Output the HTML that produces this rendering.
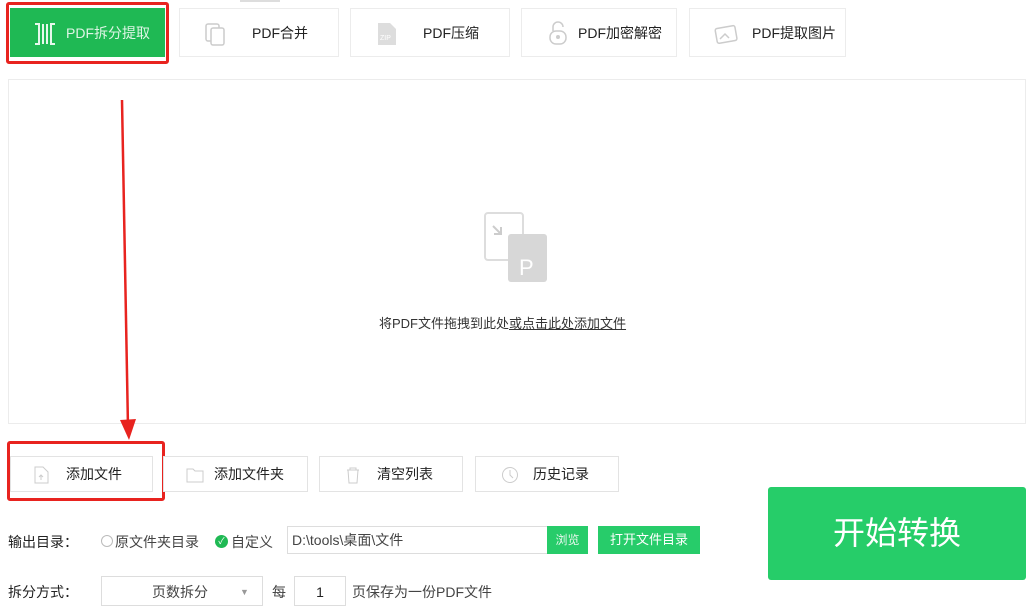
<!DOCTYPE html>
<html><head><meta charset="utf-8"><style>
*{margin:0;padding:0;box-sizing:border-box}
body{width:1034px;height:598px;overflow:hidden;background:#fff;position:relative;font-family:"Liberation Sans","Noto Sans CJK SC",sans-serif;color:#222;font-size:14px}
.a{position:absolute}
.tab{position:absolute;top:8px;height:49px;border:1px solid #ececec;background:#fff;display:flex;align-items:center;font-size:14px;color:#222}
.btn{position:absolute;top:456px;height:36px;border:1px solid #e3e3e3;background:#fff;display:flex;align-items:center;font-size:14px;color:#222}
.red{position:absolute;border:3px solid #e8231f;border-radius:3px}
</style></head><body>
<div class="a" style="left:240px;top:0;width:40px;height:2px;background:#ddd"></div>
<div class="tab" style="left:10px;width:155px;background:#1fb954;border-color:#1fb954;color:#dff5e6">
 <svg class="a" style="left:22px;top:13px" width="26" height="24"><path d="M2 2h4v20H2M10 2v20M14 2v20M22 2h-4v20h4" fill="none" stroke="#e6f8ec" stroke-width="2"/></svg><span style="margin-left:55px">PDF拆分提取</span></div>
<div class="red" style="left:6px;top:2px;width:163px;height:62px"></div>
<div class="tab" style="left:179px;width:160px"><svg class="a" style="left:24px;top:13px" width="24" height="24"><rect x="2" y="2" width="13" height="17" rx="2" fill="none" stroke="#ccc" stroke-width="1.5"/><rect x="7" y="6" width="13" height="17" rx="2" fill="#fff" stroke="#ccc" stroke-width="1.5"/></svg><span style="margin-left:72px">PDF合并</span></div>
<div class="tab" style="left:350px;width:160px"><svg class="a" style="left:24px;top:12px" width="24" height="26"><path d="M3 2h12l6 6v16H3z" fill="#ddd"/><text x="5" y="19" font-size="7" fill="#fff" font-family="Liberation Sans">ZIP</text></svg><span style="margin-left:72px">PDF压缩</span></div>
<div class="tab" style="left:521px;width:156px"><svg class="a" style="left:24px;top:11px" width="24" height="26"><path d="M7 11V7a5 5 0 0 1 10 0" fill="none" stroke="#ccc" stroke-width="1.5"/><rect x="4" y="11" width="16" height="13" rx="6" fill="none" stroke="#ccc" stroke-width="1.5"/><circle cx="12" cy="17" r="2" fill="#ccc"/></svg><span style="margin-left:56px">PDF加密解密</span></div>
<div class="tab" style="left:689px;width:157px"><svg class="a" style="left:24px;top:13px" width="28" height="24"><rect x="2" y="5" width="20" height="15" rx="2" fill="none" stroke="#ccc" stroke-width="1.5" transform="rotate(-10 12 12)"/><path d="M6 17l5-5 4 4" fill="none" stroke="#ccc" stroke-width="1.5"/></svg><span style="margin-left:62px">PDF提取图片</span></div>
<div class="a" style="left:8px;top:79px;width:1018px;height:345px;border:1px solid #ececec"></div>
<svg class="a" style="left:484px;top:212px" width="64" height="72"><rect x="1" y="1" width="38" height="47" rx="3" fill="#fff" stroke="#ddd" stroke-width="2"/><path d="M9 14l8 8M17 15v7h-7" fill="none" stroke="#ccc" stroke-width="2"/><rect x="24" y="22" width="39" height="48" rx="3" fill="#d7d7d7"/><text x="35" y="63" font-size="22" fill="#fff" font-family="Liberation Sans">P</text></svg>
<div class="a" style="left:379px;top:313px;font-size:13px;color:#333">将PDF文件拖拽到此处<span style="text-decoration:underline">或点击此处添加文件</span></div>
<svg class="a" style="left:112px;top:98px" width="30" height="345"><path d="M10 2L16 330" stroke="#e8231f" stroke-width="2.5"/><path d="M8 322L17 342L24 321z" fill="#e8231f"/></svg>
<div class="btn" style="left:10px;width:143px"><svg class="a" style="left:22px;top:9px" width="16" height="18"><path d="M2 1h8l5 5v11H2z" fill="none" stroke="#ccc"/><path d="M8 14V9M6 11l2-2 2 2" stroke="#ccc" fill="none"/></svg><span style="margin-left:55px">添加文件</span></div>
<div class="red" style="left:7px;top:441px;width:158px;height:60px"></div>
<div class="btn" style="left:163px;width:145px"><svg class="a" style="left:22px;top:10px" width="18" height="16"><path d="M1 2h6l2 2h8v11H1z" fill="none" stroke="#ccc"/></svg><span style="margin-left:50px">添加文件夹</span></div>
<div class="btn" style="left:319px;width:144px"><svg class="a" style="left:25px;top:9px" width="16" height="18"><path d="M2 4h12M5 4V2h6v2M3 4l1 13h8l1-13" fill="none" stroke="#ccc"/></svg><span style="margin-left:57px">清空列表</span></div>
<div class="btn" style="left:475px;width:144px"><svg class="a" style="left:25px;top:9px" width="18" height="18"><circle cx="9" cy="9" r="7.5" fill="none" stroke="#ccc"/><path d="M9 4v5l3 3" fill="none" stroke="#ccc"/></svg><span style="margin-left:57px">历史记录</span></div>
<div class="a" style="left:8px;top:532px;font-size:14px">输出目录：</div>
<div class="a" style="left:101px;top:535px;width:12px;height:12px;border:1px solid #bbb;border-radius:50%"></div>
<div class="a" style="left:115px;top:532px;font-size:14px;color:#444">原文件夹目录</div>
<div class="a" style="left:215px;top:535px;width:13px;height:13px;background:#1fb954;border-radius:50%;color:#fff;font-size:9px;text-align:center;line-height:13px">✓</div>
<div class="a" style="left:231px;top:532px;font-size:14px;color:#444">自定义</div>
<div class="a" style="left:287px;top:526px;width:261px;height:28px;border:1px solid #ddd;padding-left:4px;line-height:26px;font-size:14px;color:#444">D:\tools\桌面\文件</div>
<div class="a" style="left:547px;top:526px;width:41px;height:28px;background:#27cc6a;color:#e8f8ee;font-size:12px;text-align:center;line-height:28px">浏览</div>
<div class="a" style="left:598px;top:526px;width:102px;height:28px;background:#27cc6a;color:#fff;font-size:13px;text-align:center;line-height:28px">打开文件目录</div>
<div class="a" style="left:768px;top:487px;width:258px;height:93px;background:#26cd69;border-radius:3px;color:#fff;font-size:32px;text-align:center;line-height:93px">开始转换</div>
<div class="a" style="left:8px;top:582px;font-size:14px">拆分方式：</div>
<div class="a" style="left:101px;top:576px;width:162px;height:30px;border:1px solid #ddd;font-size:14px;color:#444;padding-left:50px;line-height:30px">页数拆分<span style="position:absolute;left:138px;top:0;font-size:9px;color:#999">▼</span></div>
<div class="a" style="left:272px;top:582px;font-size:14px;color:#444">每</div>
<div class="a" style="left:294px;top:576px;width:52px;height:30px;border:1px solid #ddd;text-align:center;line-height:30px;font-size:14px">1</div>
<div class="a" style="left:352px;top:582px;font-size:14px;color:#444">页保存为一份PDF文件</div>
</body></html>
